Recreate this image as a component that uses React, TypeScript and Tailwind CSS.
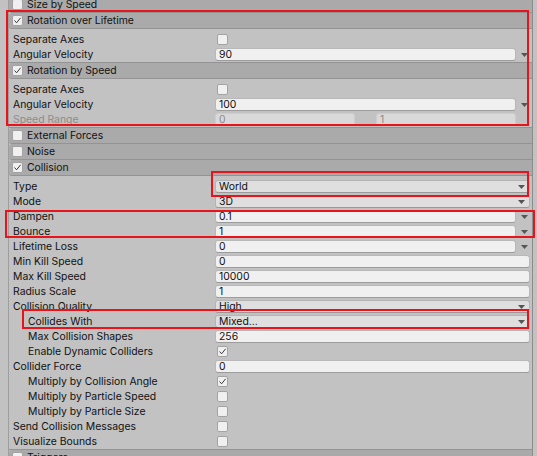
import React from 'react';

type Field =
  | { kind: 'check'; checked: boolean }
  | { kind: 'num'; value: string; curve?: boolean }
  | { kind: 'drop'; value: string }
  | { kind: 'range'; a: string; b: string };

type Row = { label: string; indent?: boolean; disabled?: boolean; field: Field };

type Section = { title: string; checked: boolean; rows?: Row[] };

const sections: Section[] = [
  { title: 'Size by Speed', checked: false },
  {
    title: 'Rotation over Lifetime',
    checked: true,
    rows: [
      { label: 'Separate Axes', field: { kind: 'check', checked: false } },
      { label: 'Angular Velocity', field: { kind: 'num', value: '90', curve: true } },
    ],
  },
  {
    title: 'Rotation by Speed',
    checked: true,
    rows: [
      { label: 'Separate Axes', field: { kind: 'check', checked: false } },
      { label: 'Angular Velocity', field: { kind: 'num', value: '100', curve: true } },
      { label: 'Speed Range', disabled: true, field: { kind: 'range', a: '0', b: '1' } },
    ],
  },
  { title: 'External Forces', checked: false },
  { title: 'Noise', checked: false },
  {
    title: 'Collision',
    checked: true,
    rows: [
      { label: 'Type', field: { kind: 'drop', value: 'World' } },
      { label: 'Mode', field: { kind: 'drop', value: '3D' } },
      { label: 'Dampen', field: { kind: 'num', value: '0.1', curve: true } },
      { label: 'Bounce', field: { kind: 'num', value: '1', curve: true } },
      { label: 'Lifetime Loss', field: { kind: 'num', value: '0', curve: true } },
      { label: 'Min Kill Speed', field: { kind: 'num', value: '0' } },
      { label: 'Max Kill Speed', field: { kind: 'num', value: '10000' } },
      { label: 'Radius Scale', field: { kind: 'num', value: '1' } },
      { label: 'Collision Quality', field: { kind: 'drop', value: 'High' } },
      { label: 'Collides With', indent: true, field: { kind: 'drop', value: 'Mixed...' } },
      { label: 'Max Collision Shapes', indent: true, field: { kind: 'num', value: '256' } },
      { label: 'Enable Dynamic Colliders', indent: true, field: { kind: 'check', checked: true } },
      { label: 'Collider Force', field: { kind: 'num', value: '0' } },
      { label: 'Multiply by Collision Angle', indent: true, field: { kind: 'check', checked: true } },
      { label: 'Multiply by Particle Speed', indent: true, field: { kind: 'check', checked: false } },
      { label: 'Multiply by Particle Size', indent: true, field: { kind: 'check', checked: false } },
      { label: 'Send Collision Messages', field: { kind: 'check', checked: false } },
      { label: 'Visualize Bounds', field: { kind: 'check', checked: false } },
    ],
  },
  { title: 'Triggers', checked: false },
];

const Arrow = () => (
  <svg width="7" height="4" viewBox="0 0 7 4">
    <path d="M0 0h7L3.5 4z" fill="#555555" />
  </svg>
);

const Checkbox = ({ checked }: { checked: boolean }) => (
  <div className="flex h-[11px] w-[11px] items-center justify-center rounded-[2px] border border-[#a3a3a3] bg-[#f0f0f0]">
    {checked && (
      <svg width="9" height="9" viewBox="0 0 9 9">
        <path d="M1.5 4.5L3.6 6.8L7.6 1.8" fill="none" stroke="#3a3a3a" strokeWidth="1" />
      </svg>
    )}
  </div>
);

const Value = ({ field }: { field: Field }) => {
  if (field.kind === 'check') {
    return (
      <div className="ml-[2px] flex h-[15px] items-center">
        <Checkbox checked={field.checked} />
      </div>
    );
  }
  if (field.kind === 'drop') {
    return (
      <div className="my-[1px] mr-[2px] flex h-[13px] flex-1 items-center justify-between rounded-[3px] border border-[#b4b4b4] border-b-[#999999] bg-[#dfdfdf] pl-[3px] pr-[4px]">
        <span>{field.value}</span>
        <Arrow />
      </div>
    );
  }
  if (field.kind === 'range') {
    return (
      <div className="my-[1px] flex h-[13px] flex-1 gap-[21px] pr-[16px] text-[#8c8c8c]">
        <div className="flex flex-1 items-center rounded-[3px] border border-[#cdcdcd] bg-[#d9d9d9] pl-[3px]">{field.a}</div>
        <div className="flex flex-1 items-center rounded-[3px] border border-[#cdcdcd] bg-[#d9d9d9] pl-[3px]">{field.b}</div>
      </div>
    );
  }
  return (
    <div className="flex flex-1 items-center">
      <div
        className={
          'my-[1px] flex h-[13px] flex-1 items-center rounded-[3px] border border-[#b8b8b8] border-b-[#9c9c9c] bg-[#f0f0f0] pl-[3px] ' +
          (field.curve ? '' : 'mr-[2px]')
        }
      >
        {field.value}
      </div>
      {field.curve && (
        <div className="flex w-[16px] justify-center pl-[1px]">
          <Arrow />
        </div>
      )}
    </div>
  );
};

const Header = ({ title, checked }: { title: string; checked: boolean }) => (
  <div className="flex h-[16px] shrink-0 items-center rounded-l-[3px] border-b border-[#939393] bg-[#aaaaaa] pl-[3px]">
    <Checkbox checked={checked} />
    <span className="ml-[4px]">{title}</span>
  </div>
);

export default function App() {
  return (
    <div className="relative flex h-[456px] w-[537px] overflow-hidden bg-[#c2c2c2] font-['Inter','Liberation_Sans',sans-serif] text-[10.4px] leading-[15px] text-[#111111]">
      <div className="w-[9px] shrink-0 border-r border-[#9e9e9e]" />
      <div className="-mt-[3px] flex w-[523px] flex-col">
        {sections.map((s) => (
          <div key={s.title} className="flex flex-col">
            <Header title={s.title} checked={s.checked} />
            {s.rows && (
              <div className="flex flex-col border-b border-[#939393] pt-[3px]">
                {s.rows.map((r, i) => (
                  <div key={i} className="flex h-[15px]">
                    <div
                      className={
                        'w-[206px] shrink-0 whitespace-nowrap ' +
                        (r.indent ? 'pl-[19px] ' : 'pl-[4px] ') +
                        (r.disabled ? 'text-[#8d8d8d]' : '')
                      }
                    >
                      {r.label}
                    </div>
                    <Value field={r.field} />
                  </div>
                ))}
              </div>
            )}
          </div>
        ))}
      </div>
      <div className="w-[5px] shrink-0 border-l border-[#8c8c8c]" />

      <div className="pointer-events-none absolute left-[6px] top-[10px] h-[116px] w-[523px] border-2 border-[#e8131b]" />
      <div className="pointer-events-none absolute left-[211px] top-[171px] h-[26px] w-[318px] border-2 border-[#e8131b]" />
      <div className="pointer-events-none absolute left-[5px] top-[210px] h-[28px] w-[530px] border-2 border-[#e8131b]" />
      <div className="pointer-events-none absolute left-[22px] top-[309px] h-[20px] w-[507px] border-2 border-[#e8131b]" />
    </div>
  );
}
